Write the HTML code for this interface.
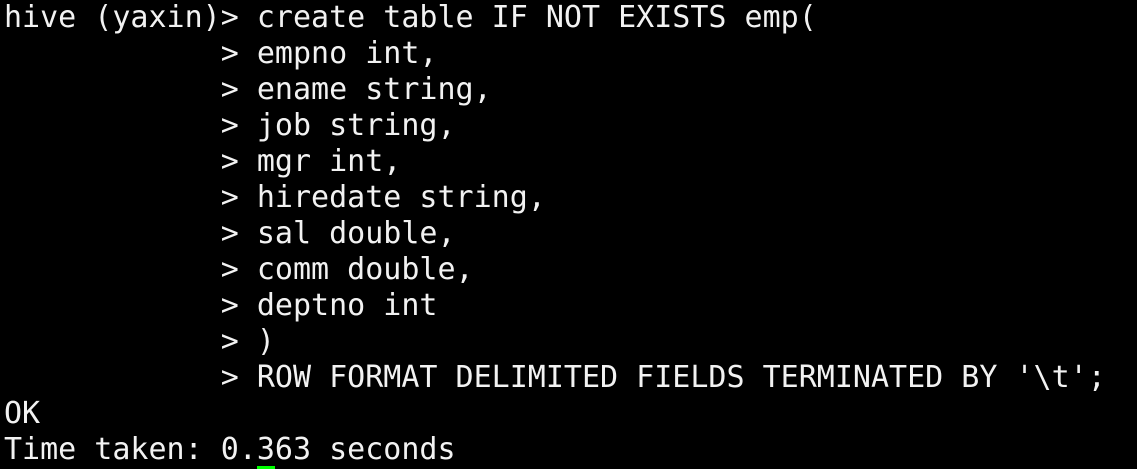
<!DOCTYPE html>
<html><head><style>
html,body{margin:0;padding:0;background:#000;width:1137px;height:469px;overflow:hidden}
pre{margin:0;position:absolute;left:4px;top:0;font-family:"DejaVu Sans Mono","Liberation Mono",monospace;font-size:30px;line-height:36px;color:#f2f2f2;}
.cur{position:absolute;left:257px;top:466px;width:18px;height:3px;background:#00ff00}
</style></head><body>
<pre>hive (yaxin)&gt; create table IF NOT EXISTS emp(
            &gt; empno int,
            &gt; ename string,
            &gt; job string,
            &gt; mgr int,
            &gt; hiredate string,
            &gt; sal double,
            &gt; comm double,
            &gt; deptno int
            &gt; )
            &gt; ROW FORMAT DELIMITED FIELDS TERMINATED BY '\t';
OK
Time taken: 0.363 seconds</pre>
<div class="cur"></div>
</body></html>
